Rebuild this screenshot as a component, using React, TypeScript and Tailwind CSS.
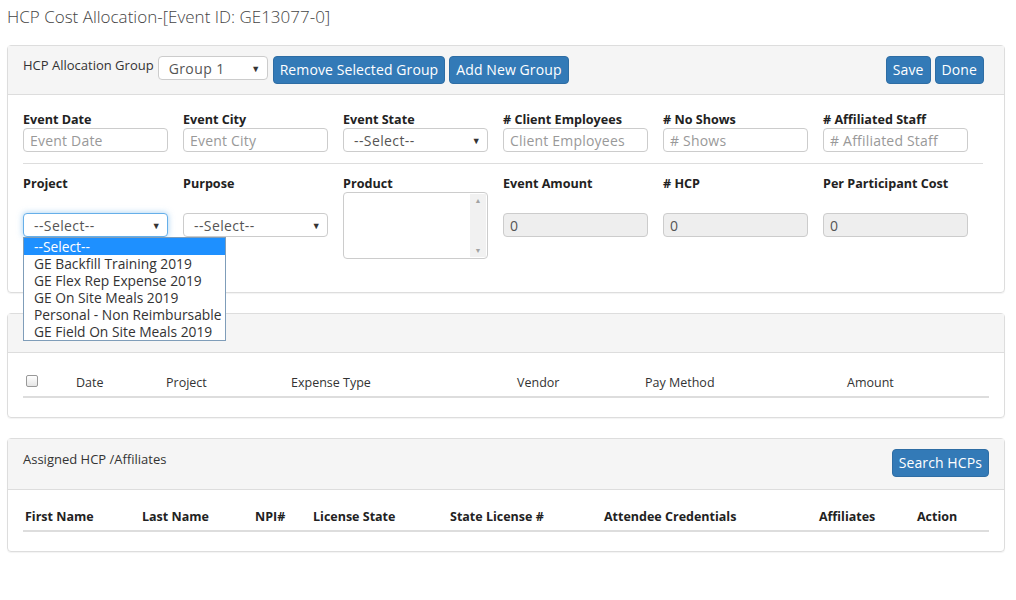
import React from "react";

const FONT = "font-['Open_Sans','Noto_Sans',sans-serif]";

function Caret() {
  return <span className="text-[9px] leading-none text-[#333]">▼</span>;
}

function FakeSelect({ value, className = "", focus = false }: { value: string; className?: string; focus?: boolean }) {
  return (
    <div
      className={`flex h-[24px] items-center justify-between rounded-[4px] border bg-white pl-[10px] pr-[6px] text-[14px] tracking-[0.4px] text-[#555] ${
        focus ? "border-[#66afe9] shadow-[0_0_6px_rgba(102,175,233,0.6)]" : "border-[#ccc]"
      } ${className}`}
    >
      <span>{value}</span>
      <Caret />
    </div>
  );
}

function TextInput({ placeholder }: { placeholder: string }) {
  return (
    <div className="flex h-[24px] w-[145px] items-center rounded-[4px] border border-[#ccc] bg-white px-[6px] text-[14px] tracking-[0.2px] text-[#999]">
      {placeholder}
    </div>
  );
}

function ReadOnly({ value }: { value: string }) {
  return (
    <div className="flex h-[24px] w-[145px] items-center rounded-[4px] border border-[#ccc] bg-[#eee] px-[6px] text-[14px] text-[#555]">
      {value}
    </div>
  );
}

function Btn({ children }: { children: React.ReactNode }) {
  return (
    <button className="h-[28px] rounded-[4px] border border-[#2e6da4] bg-[#337ab7] px-[6px] text-[14px] leading-none tracking-[0.1px] text-white">
      {children}
    </button>
  );
}

function Label({ children }: { children: React.ReactNode }) {
  return <div className="h-[17px] text-[12.6px] font-bold leading-[17px] text-[#222]">{children}</div>;
}

const projects = [
  "--Select--",
  "GE Backfill Training 2019",
  "GE Flex Rep Expense 2019",
  "GE On Site Meals 2019",
  "Personal - Non Reimbursable",
  "GE Field On Site Meals 2019",
];

export default function App() {
  return (
    <div className={`min-h-[600px] bg-white px-[7px] pt-[5px] text-[13px] text-[#333] ${FONT}`}>
      <h4 className="h-[24px] text-[17px] font-light leading-[24px] text-[#444]">HCP Cost Allocation-[Event ID: GE13077-0]</h4>

      {/* Allocation panel */}
      <div className="mt-[16px] w-[998px] rounded-[4px] border border-[#ddd] shadow-[0_1px_1px_rgba(0,0,0,0.05)]">
        <div className="flex h-[49px] items-start border-b border-[#ddd] bg-[#f5f5f5] px-[15px] pt-[10px]">
          <span className="text-[13px] text-[#333]">HCP Allocation Group</span>
          <FakeSelect value="Group 1" className="ml-[4px] w-[110px] text-[#333]" />
          <div className="ml-[5px] flex gap-[4px]">
            <Btn>Remove Selected Group</Btn>
            <Btn>Add New Group</Btn>
          </div>
          <div className="ml-auto mr-[5px] flex gap-[4px]">
            <Btn>Save</Btn>
            <Btn>Done</Btn>
          </div>
        </div>

        <div className="h-[197px] px-[15px] pt-[16px]">
          <div className="grid w-[960px] grid-cols-6">
            <div>
              <Label>Event Date</Label>
              <TextInput placeholder="Event Date" />
            </div>
            <div>
              <Label>Event City</Label>
              <TextInput placeholder="Event City" />
            </div>
            <div>
              <Label>Event State</Label>
              <FakeSelect value="--Select--" className="w-[145px]" />
            </div>
            <div>
              <Label># Client Employees</Label>
              <TextInput placeholder="Client Employees" />
            </div>
            <div>
              <Label># No Shows</Label>
              <TextInput placeholder="# Shows" />
            </div>
            <div>
              <Label># Affiliated Staff</Label>
              <TextInput placeholder="# Affiliated Staff" />
            </div>
          </div>

          <div className="mb-[11px] mt-[11px] w-[960px] border-t border-[#ddd]" />

          <div className="grid w-[960px] grid-cols-6">
            <div className="relative">
              <Label>Project</Label>
              <FakeSelect value="--Select--" focus className="mt-[21px] w-[145px]" />
              <div className="absolute left-0 top-[62px] z-10 w-[203px] border border-[#7f9db9] bg-white">
                {projects.map((p, i) => (
                  <div
                    key={p}
                    className={`h-[17px] whitespace-nowrap pl-[10px] text-[13.8px] leading-[17px] ${
                      i === 0 ? "bg-[#1e90ff] text-white" : "text-[#333]"
                    }`}
                  >
                    {p}
                  </div>
                ))}
              </div>
            </div>
            <div>
              <Label>Purpose</Label>
              <FakeSelect value="--Select--" className="mt-[21px] w-[145px]" />
            </div>
            <div>
              <Label>Product</Label>
              <div className="flex h-[67px] w-[145px] justify-end rounded-[4px] border border-[#ccc] bg-white p-[1px]">
                <div className="flex w-[16px] flex-col items-center justify-between bg-[#f1f1f1] py-[3px] text-[7px] leading-none text-[#a3a3a3]">
                  <span>▲</span>
                  <span>▼</span>
                </div>
              </div>
            </div>
            <div>
              <Label>Event Amount</Label>
              <div className="mt-[21px]">
                <ReadOnly value="0" />
              </div>
            </div>
            <div>
              <Label># HCP</Label>
              <div className="mt-[21px]">
                <ReadOnly value="0" />
              </div>
            </div>
            <div>
              <Label>Per Participant Cost</Label>
              <div className="mt-[21px]">
                <ReadOnly value="0" />
              </div>
            </div>
          </div>
        </div>
      </div>

      {/* Expenses panel */}
      <div className="mt-[20px] w-[998px] rounded-[4px] border border-[#ddd] shadow-[0_1px_1px_rgba(0,0,0,0.05)]">
        <div className="h-[39px] border-b border-[#ddd] bg-[#f5f5f5]" />
        <div className="px-[15px] pb-[19px] pt-[18px]">
          <div className="grid h-[27px] grid-cols-[50px_90px_125px_226px_128px_202px_1fr] items-center border-b-2 border-[#ddd] pl-[3px] text-[12.5px] text-[#333]">
            <span className="mb-[6px] h-[12px] w-[12px] rounded-[2px] border border-[#999] bg-gradient-to-b from-white to-[#e6e6e6]" />
            <span>Date</span>
            <span>Project</span>
            <span>Expense Type</span>
            <span>Vendor</span>
            <span>Pay Method</span>
            <span>Amount</span>
          </div>
        </div>
      </div>

      {/* HCP panel */}
      <div className="mt-[20px] w-[998px] rounded-[4px] border border-[#ddd] shadow-[0_1px_1px_rgba(0,0,0,0.05)]">
        <div className="flex h-[51px] items-start justify-between border-b border-[#ddd] bg-[#f5f5f5] pl-[15px] pr-[15px] pt-[10px]">
          <span className="mt-[1px] text-[13px] text-[#333]">Assigned HCP /Affiliates</span>
          <Btn>Search HCPs</Btn>
        </div>
        <div className="px-[15px] pb-[19px] pt-[14px]">
          <div className="grid h-[28px] grid-cols-[117px_113px_58px_137px_154px_215px_98px_1fr] items-center border-b-2 border-[#ddd] pl-[2px] text-[12.5px] font-bold text-[#222]">
            <span>First Name</span>
            <span>Last Name</span>
            <span>NPI#</span>
            <span>License State</span>
            <span>State License #</span>
            <span>Attendee Credentials</span>
            <span>Affiliates</span>
            <span>Action</span>
          </div>
        </div>
      </div>
    </div>
  );
}
